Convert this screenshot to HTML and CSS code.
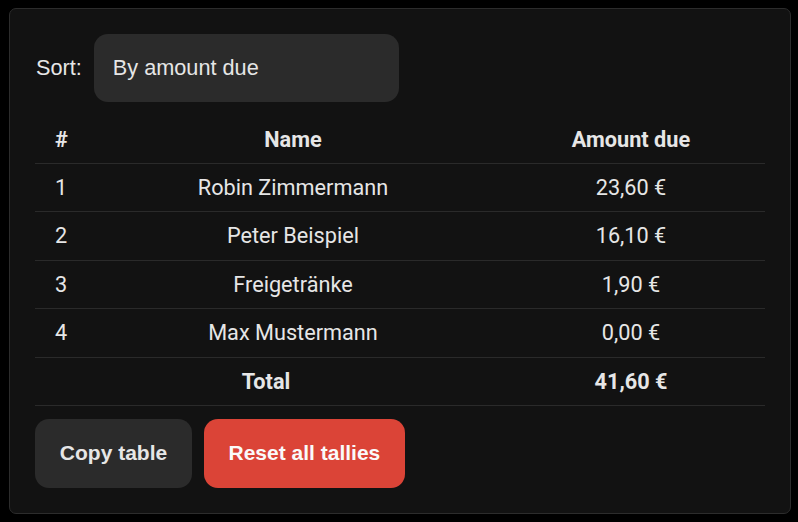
FILE: index.html
```html
<!DOCTYPE html>
<html lang="en">
<head>
<meta charset="utf-8">
<title>Tallies</title>
<link rel="stylesheet" href="styles.css">
</head>
<body>
<div class="card">
  <div class="toolbar">
    <label class="sort-label" for="sort">Sort:</label>
    <div class="select" id="sort">By amount due</div>
  </div>
  <table class="tally">
    <colgroup>
      <col class="c-idx">
      <col class="c-name">
      <col class="c-amt">
    </colgroup>
    <thead>
      <tr><th class="idx">#</th><th>Name</th><th>Amount due</th></tr>
    </thead>
    <tbody>
      <tr><td class="idx">1</td><td>Robin Zimmermann</td><td>23,60 €</td></tr>
      <tr><td class="idx">2</td><td>Peter Beispiel</td><td>16,10 €</td></tr>
      <tr><td class="idx">3</td><td>Freigetränke</td><td>1,90 €</td></tr>
      <tr><td class="idx">4</td><td>Max Mustermann</td><td>0,00 €</td></tr>
      <tr class="total"><td colspan="2">Total</td><td>41,60 €</td></tr>
    </tbody>
  </table>
  <div class="actions">
    <button class="btn btn-neutral">Copy table</button>
    <button class="btn btn-danger">Reset all tallies</button>
  </div>
</div>
</body>
</html>
```
FILE: styles.css
```css
html, body {
  margin: 0;
  padding: 0;
  background: #000;
}
body {
  padding: 8px 8px 0 9px;
  color: #e6e6e6;
}
.card {
  width: 730px;
  background: #121212;
  border: 1px solid #2c2c2c;
  border-radius: 7px;
  padding: 25px;
}
.toolbar {
  display: flex;
  align-items: center;
  gap: 12px;
  font-family: "Liberation Sans", Arial, sans-serif;
  font-size: 21.7px;
}
.sort-label {
  padding-left: 1px;
  color: #e6e6e6;
}
.select {
  width: 305px;
  height: 68px;
  box-sizing: border-box;
  padding-left: 19px;
  display: flex;
  align-items: center;
  background: #2b2b2b;
  border-radius: 14px;
  color: #e6e6e6;
}
.tally {
  width: 730px;
  margin-top: 13.6px;
  border-collapse: collapse;
  font-family: Roboto, sans-serif;
  font-size: 21.7px;
  line-height: 25.4px;
  color: #e6e6e6;
}
.c-idx { width: 54px; }
.c-name { width: 408px; }
.c-amt { width: 268px; }
.tally th, .tally td {
  padding: 11px 0;
  text-align: center;
  border-bottom: 1px solid #2a2a2a;
  font-weight: 400;
}
.tally th { font-weight: 700; }
.tally .idx {
  text-align: left;
  padding-left: 20px;
}
.tally .total td { font-weight: 700; }
.actions {
  display: flex;
  gap: 12px;
  margin-top: 12.6px;
}
.btn {
  height: 69px;
  border: none;
  border-radius: 14px;
  font-family: "Liberation Sans", Arial, sans-serif;
  font-size: 21px;
  font-weight: 700;
}
.btn-neutral {
  background: #2b2b2b;
  color: #e6e6e6;
  width: 157px;
  padding: 0;
}
.btn-danger {
  background: #db4437;
  color: #fafafa;
  padding: 0 24.5px;
}
```
